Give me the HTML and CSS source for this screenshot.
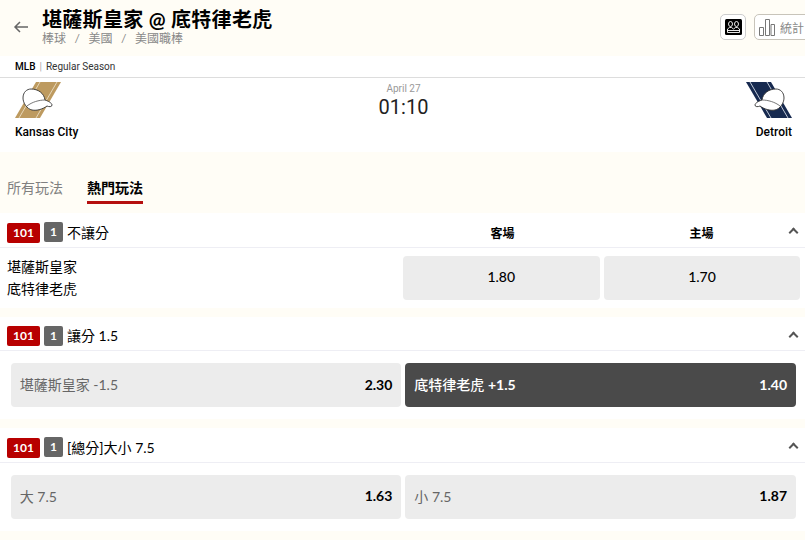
FILE: index.html
```html
<!DOCTYPE html>
<html>
<head>
    <meta charset="UTF-8">
    <title>堪薩斯皇家 @ 底特律老虎</title>
    <link rel="stylesheet" href="styles.css">
</head>
<body>
    <header class="top">
        <svg class="back" width="16" height="14" viewBox="0 0 16 14"><path d="M15 7H2M7 2L2 7l5 5" fill="none" stroke="#666" stroke-width="1.5"/></svg>
        <div class="top-text">
            <h1 class="match-title">堪薩斯皇家 @ 底特律老虎</h1>
            <div class="crumbs"><span>棒球</span><i>/</i><span>美國</span><i>/</i><span>美國職棒</span></div>
        </div>
        <div class="top-btns">
            <a class="btn-square"><svg width="17" height="16" viewBox="0 0 17 16"><rect width="17" height="16" rx="1.500" fill="#000"/><path d="M5.500 2.500a2 2.500 0 0 1 0 5 2 2.500 0 0 1 0-5zM11.500 2.500a2 2.500 0 0 1 0 5 2 2.500 0 0 1 0-5zM2.500 13.500V10l2-1.500h2L8.500 10l2-1.500h2l2 1.500v3.500zM2.500 11.500h12" fill="none" stroke="#fff" stroke-width=".9"/></svg></a>
            <a class="btn-stats"><svg width="16" height="17" viewBox="0 0 16 17"><path d="M.5 8.500h4v8h-4zM6.500 .5h4v16h-4zM12 5.500h3.500v11H12z" fill="none" stroke="#777"/></svg>統計</a>
        </div>
    </header>

    <div class="league"><b>MLB</b><i>|</i><span>Regular Season</span></div>

    <section class="match">
        <div class="team">
            <svg class="logo" width="46" height="36" viewBox="0 0 46 36">
                <path d="M0 36L21 0h25L25 36z" fill="#bd9a5f"/>
                <path d="M4 36L25 0M21 36L42 0" fill="none" stroke="#e6d6b8"/>
                <path d="M8 16C8 10 12 7 16 7c7 0 13 4 14 11 3 1 7 3 7 5s-3 2-5 1c-4 3-10 5-15 4-5-1-9-7-9-12z" fill="#fff" stroke="#333" stroke-width=".9"/>
                <path d="M12 24c5-4 12-6 18-6" fill="none" stroke="#555" stroke-width=".8"/>
            </svg>
            <div class="team-name">Kansas City</div>
        </div>
        <div class="time-box">
            <div class="date">April 27</div>
            <div class="time">01:10</div>
        </div>
        <div class="team team-away">
            <svg class="logo" width="46" height="36" viewBox="0 0 46 36">
                <path d="M46 36L25 0H0l21 36z" fill="#16294f"/>
                <path d="M42 36L21 0M25 36L4 0" fill="none" stroke="#c3cbd8"/>
                <path d="M38 16c0-6-4-9-8-9-7 0-13 4-14 11-3 1-7 3-7 5s3 2 5 1c4 3 10 5 15 4 5-1 9-7 9-12z" fill="#fff" stroke="#333" stroke-width=".9"/>
                <path d="M34 24c-5-4-12-6-18-6" fill="none" stroke="#555" stroke-width=".8"/>
            </svg>
            <div class="team-name">Detroit</div>
        </div>
    </section>

    <nav class="tabs">
        <a>所有玩法</a>
        <a class="on">熱門玩法</a>
    </nav>

    <section class="market">
        <div class="market-head">
            <span class="tag-red">101</span><span class="tag-grey">1</span>
            <span class="market-name">不讓分</span>
            <div class="cols"><span>客場</span><span>主場</span></div>
            <span class="arrow"></span>
        </div>
        <div class="row-teams">
            <div class="names"><div>堪薩斯皇家</div><div>底特律老虎</div></div>
            <a class="odd odd-center">1.80</a>
            <a class="odd odd-center">1.70</a>
        </div>
    </section>

    <section class="market">
        <div class="market-head">
            <span class="tag-red">101</span><span class="tag-grey">1</span>
            <span class="market-name">讓分 1.5</span>
            <span class="arrow"></span>
        </div>
        <div class="row-odds">
            <a class="odd"><span class="lbl">堪薩斯皇家 -1.5</span><b>2.30</b></a>
            <a class="odd odd-on"><span class="lbl">底特律老虎 <b>+1.5</b></span><b>1.40</b></a>
        </div>
    </section>

    <section class="market">
        <div class="market-head">
            <span class="tag-red">101</span><span class="tag-grey">1</span>
            <span class="market-name">[總分]大小 7.5</span>
            <span class="arrow"></span>
        </div>
        <div class="row-odds">
            <a class="odd"><span class="lbl">大 7.5</span><b>1.63</b></a>
            <a class="odd"><span class="lbl">小 7.5</span><b>1.87</b></a>
        </div>
    </section>
</body>
</html>
```

FILE: styles.css
```css
body {
  margin: 0;
  height: 540px;
  overflow: hidden;
  background-color: #fffdf6;
  font-family: Lato, "Noto Sans CJK TC", sans-serif;
  color: #000;
}

/* header */
.top {
  height: 56px;
  display: flex;
  align-items: flex-start;
  overflow: hidden;
}

.back {
  margin: 20px 0 0 13px;
}

.top-text {
  margin-left: 13px;
  padding-top: 7px;
  flex: 1;
}

.match-title {
  margin: 0;
  font-size: 20px;
  line-height: 24px;
  font-weight: 700;
  letter-spacing: 0.3px;
}

.crumbs {
  font-size: 12px;
  line-height: 14px;
  margin-top: 1px;
  color: #888;
  display: flex;
  gap: 8.500px;
}

.crumbs i {
  font-style: normal;
}

.top-btns {
  display: flex;
  gap: 8px;
  padding-top: 14px;
  margin-right: -8px;
}

.btn-square,
.btn-stats {
  height: 24px;
  border: 1px solid #ccc;
  border-radius: 5px;
  background-color: #fff;
  display: flex;
  align-items: center;
}

.btn-square {
  width: 24px;
  justify-content: center;
}

.btn-stats {
  width: 53px;
  padding-left: 4px;
  gap: 5px;
  font-size: 12px;
  color: #888;
  white-space: nowrap;
  border-color: #c8c4ba;
}

/* league bar */
.league {
  height: 21px;
  background-color: #fff;
  border-bottom: 1px solid #ddd;
  padding-left: 15px;
  display: flex;
  align-items: center;
  font-family: Roboto, sans-serif;
  font-size: 10px;
  color: #333;
}

.league b {
  font-weight: 500;
  color: #000;
}

.league i {
  font-style: normal;
  color: #aaa;
  margin: 0 4px;
}

/* match */
.match {
  height: 74px;
  background-color: #fff;
  display: flex;
  justify-content: space-between;
  padding: 4px 13px 0 15px;
  box-sizing: border-box;
}

.team {
  width: 64px;
}

.team-away {
  text-align: right;
  display: flex;
  flex-direction: column;
  align-items: flex-end;
}

.logo {
  display: block;
}

.team-name {
  font-family: Roboto, sans-serif;
  font-size: 12px;
  font-weight: 500;
  line-height: 14px;
  margin-top: 7px;
  white-space: nowrap;
}

.time-box {
  text-align: center;
  padding-top: 1px;
}

.date {
  font-family: Roboto, sans-serif;
  font-size: 10px;
  color: #999;
  line-height: 12px;
}

.time {
  font-family: Roboto, sans-serif;
  font-size: 20px;
  line-height: 24px;
  color: #222;
}

/* tabs */
.tabs {
  height: 61.400px;
  display: flex;
  gap: 24px;
  padding: 26px 0 0 7px;
  box-sizing: border-box;
}

.tabs a {
  height: 23px;
  font-size: 14px;
  line-height: 19px;
  color: #808080;
}

.tabs a.on {
  color: #000;
  font-weight: 700;
  border-bottom: 3px solid #b50f0f;
}

/* markets */
.market {
  background-color: #fff;
  margin-bottom: 9px;
}

.market-head {
  height: 29.500px;
  padding: 4px 0 0 7px;
  border-bottom: 1px solid #eeeef4;
  display: flex;
  align-items: center;
  position: relative;
}

.tag-red,
.tag-grey {
  color: #fff;
  font-size: 12px;
  font-weight: 700;
  border-radius: 2px;
  text-align: center;
}

.tag-red {
  width: 33px;
  height: 20px;
  line-height: 20px;
  background-color: #b80000;
  margin-top: 1px;
}

.tag-grey {
  width: 19px;
  height: 20px;
  line-height: 20px;
  background-color: #666;
  margin-left: 4px;
}

.market-name {
  margin-left: 4px;
  padding-bottom: 1px;
  font-size: 14px;
}

.cols {
  margin-left: auto;
  margin-right: 4px;
  display: flex;
  width: 398px;
  font-size: 12px;
  font-weight: 700;
}

.cols span {
  flex: 1;
  text-align: center;
}

.arrow {
  position: absolute;
  right: 8px;
  top: 16px;
  width: 5px;
  height: 5px;
  border-top: 2px solid #555;
  border-left: 2px solid #555;
  transform: rotate(45deg);
}

.row-teams {
  height: 60px;
  display: flex;
  align-items: center;
  gap: 4px;
  padding: 0 4.600px 0 7px;
  box-sizing: border-box;
}

.names {
  flex: 1;
  font-size: 14px;
  line-height: 22px;
}

.row-odds {
  display: flex;
  gap: 4px;
  padding: 12px 9px 12px 10.700px;
}

.odd {
  height: 44px;
  background-color: #ececec;
  border-radius: 4px;
  display: flex;
  align-items: center;
  justify-content: space-between;
  font-size: 14px;
  padding: 0 9px 2px 9px;
  box-sizing: border-box;
  flex: 1;
}

.odd-center {
  flex: none;
  width: 196.800px;
  justify-content: center;
  font-weight: 500;
}

.lbl {
  color: #666;
}

.odd b {
  font-weight: 700;
}

.odd-on {
  background-color: #4a4a4a;
  color: #fff;
}

.odd-on .lbl {
  color: #fff;
  font-weight: 500;
}
```
